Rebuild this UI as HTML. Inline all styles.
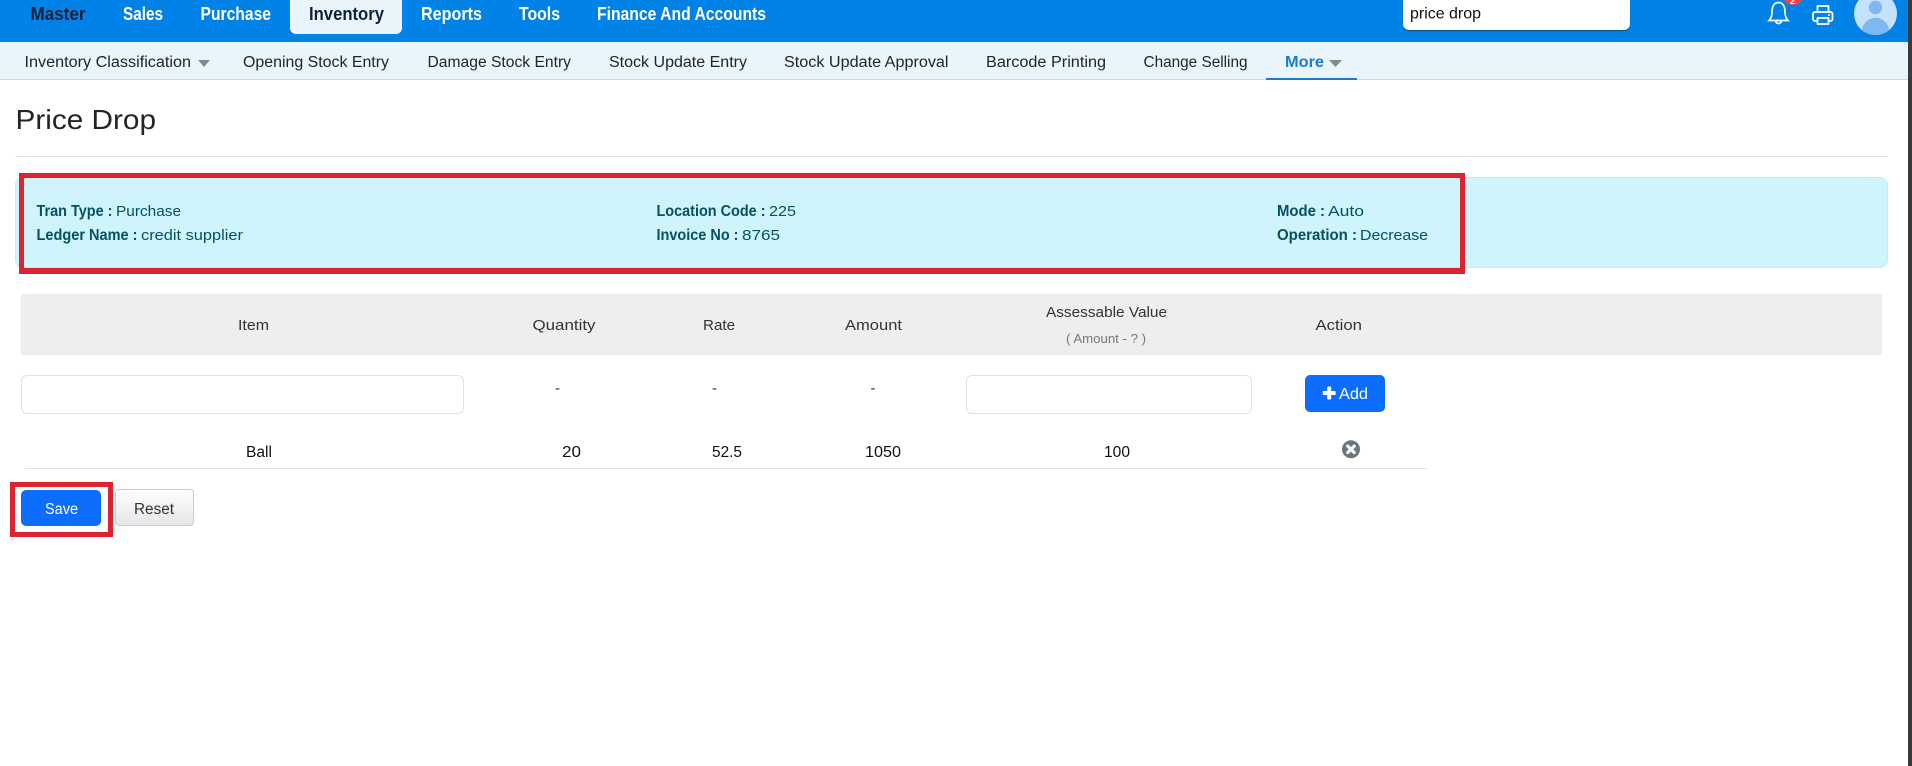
<!DOCTYPE html>
<html lang="en">
<head>
<meta charset="utf-8">
<title>Price Drop</title>
<style>
html,body{margin:0;padding:0;background:#fff;width:1912px;height:766px;overflow:hidden}
.b{position:absolute;box-sizing:border-box}
svg{position:absolute;left:0;top:0}
text{font-family:"Liberation Sans",sans-serif}
.n{font-size:18px;font-weight:bold;fill:#fff}
.s{font-size:15.5px;fill:#212529}
.l{font-size:16px;font-weight:bold;fill:#055160}
.v{font-size:15px;fill:#055160}
.t{font-size:15px;fill:#333}
.d{font-size:15.5px;fill:#111}
</style>
</head>
<body>
<div class="b" style="left:0;top:0;width:1912px;height:42px;background:#0082e6"></div>
<div class="b" style="left:290px;top:0;width:112px;height:34px;background:#eaf4fb;border-radius:0 0 6px 6px"></div>
<div class="b" style="left:1403px;top:-5px;width:227px;height:35px;background:#fff;border-radius:6px;box-shadow:0 1px 1px #0b4a70"></div>
<div class="b" style="left:0;top:42px;width:1912px;height:38px;background:#eaf4fb;border-bottom:1px solid #cbdbe6"></div>
<div class="b" style="left:1266px;top:78px;width:91px;height:2px;background:#1a7cc9"></div>
<div class="b" style="left:15px;top:156px;width:1873px;height:1px;background:#e2e4e6"></div>
<div class="b" style="left:15px;top:177px;width:1873px;height:91px;background:#cff4fc;border:1px solid #b6effb;border-radius:8px"></div>
<div class="b" style="left:19px;top:173px;width:1446px;height:101px;border:5px solid #dc2430;border-bottom-width:6px"></div>
<div class="b" style="left:21px;top:294px;width:1861px;height:61px;background:#eee"></div>
<div class="b" style="left:21px;top:375px;width:443px;height:39px;background:#fff;border:1px solid #dee2e6;border-radius:6px"></div>
<div class="b" style="left:966px;top:375px;width:286px;height:39px;background:#fff;border:1px solid #dee2e6;border-radius:6px"></div>
<div class="b" style="left:1305px;top:375px;width:80px;height:37px;background:#0d6efd;border-radius:5px"></div>
<div class="b" style="left:25px;top:468px;width:1403px;height:1px;background:#dee2e6"></div>
<div class="b" style="left:10px;top:482px;width:103px;height:55px;border:5px solid #dc2430"></div>
<div class="b" style="left:21px;top:490px;width:80px;height:36px;background:#0d6efd;border-radius:5px"></div>
<div class="b" style="left:115px;top:489px;width:79px;height:37px;background:linear-gradient(#fff,#e6e6e6);border:1px solid #ccc;border-radius:4px"></div>
<div class="b" style="left:1908px;top:0;width:4px;height:766px;background:#3a3a3a"></div>

<svg width="1912" height="766" viewBox="0 0 1912 766" xmlns="http://www.w3.org/2000/svg">
<g>
<text class="n" x="30.5" y="20" textLength="55" lengthAdjust="spacingAndGlyphs" style="fill:#0b2239">Master</text>
<text class="n" x="123" y="20" textLength="40" lengthAdjust="spacingAndGlyphs">Sales</text>
<text class="n" x="200.5" y="20" textLength="70.5" lengthAdjust="spacingAndGlyphs">Purchase</text>
<text class="n" x="309" y="20" textLength="75" lengthAdjust="spacingAndGlyphs" style="fill:#0b2239">Inventory</text>
<text class="n" x="421" y="20" textLength="61" lengthAdjust="spacingAndGlyphs">Reports</text>
<text class="n" x="519" y="20" textLength="41" lengthAdjust="spacingAndGlyphs">Tools</text>
<text class="n" x="597" y="20" textLength="169" lengthAdjust="spacingAndGlyphs">Finance And Accounts</text>
<text x="1410" y="18.5" textLength="71" lengthAdjust="spacingAndGlyphs" style="font-size:16px;fill:#111">price drop</text>
</g>
<!-- bell -->
<g fill="none" stroke="#fff" stroke-width="1.7">
<path d="M1778.5 2.5C1773.5 2.5 1772 7.5 1772 12C1772 16 1771 18.5 1769 20.5H1788C1786 18.5 1785 16 1785 12C1785 7.5 1783.5 2.5 1778.5 2.5Z"/>
<path d="M1775.5 20.5a3 3 0 0 0 6 0"/>
</g>
<path d="M1784 0H1802C1801 3 1797 5 1793 5C1789 5 1785 3 1784 0Z" fill="#e5484d"/>
<text x="1790" y="4" style="font-size:9px;font-weight:bold;fill:#fff">2</text>
<!-- printer -->
<g fill="none" stroke="#fff" stroke-width="1.8" stroke-linejoin="round">
<path d="M1817.5 12V6H1828.5V12"/>
<rect x="1813" y="12" width="19.5" height="9" rx="2"/>
<rect x="1817.5" y="18" width="11" height="6" fill="#0082e6"/>
</g>
<circle cx="1829" cy="15" r="1" fill="#fff"/>
<!-- avatar -->
<defs><clipPath id="av"><circle cx="1875.5" cy="13.5" r="21.5"/></clipPath></defs>
<circle cx="1875.5" cy="13.5" r="21.5" fill="#c5e2fb"/>
<g clip-path="url(#av)">
<circle cx="1875.5" cy="7.5" r="6.7" fill="#7fb8f0"/>
<ellipse cx="1875.5" cy="33" rx="14" ry="15.3" fill="#7fb8f0"/>
</g>

<text class="s" x="24.5" y="67" textLength="166.5" lengthAdjust="spacingAndGlyphs">Inventory Classification</text>
<path d="M198 60H210L204 67Z" fill="#808a90"/>
<text class="s" x="243" y="67" textLength="146" lengthAdjust="spacingAndGlyphs">Opening Stock Entry</text>
<text class="s" x="427.5" y="67" textLength="143.5" lengthAdjust="spacingAndGlyphs">Damage Stock Entry</text>
<text class="s" x="609" y="67" textLength="138" lengthAdjust="spacingAndGlyphs">Stock Update Entry</text>
<text class="s" x="784" y="67" textLength="164.5" lengthAdjust="spacingAndGlyphs">Stock Update Approval</text>
<text class="s" x="986" y="67" textLength="120" lengthAdjust="spacingAndGlyphs">Barcode Printing</text>
<text class="s" x="1143.5" y="67" textLength="104" lengthAdjust="spacingAndGlyphs">Change Selling</text>
<text x="1285" y="67" textLength="39" lengthAdjust="spacingAndGlyphs" style="font-size:16px;font-weight:bold;fill:#1a7cc9">More</text>
<path d="M1329 60H1342L1335.5 67Z" fill="#808a90"/>

<text x="15.5" y="129" textLength="140.5" lengthAdjust="spacingAndGlyphs" style="font-size:28px;fill:#212529">Price Drop</text>

<text class="l" x="36.5" y="216" textLength="76" lengthAdjust="spacingAndGlyphs">Tran Type :</text>
<text class="v" x="116" y="216" textLength="65" lengthAdjust="spacingAndGlyphs">Purchase</text>
<text class="l" x="36.5" y="240" textLength="101" lengthAdjust="spacingAndGlyphs">Ledger Name :</text>
<text class="v" x="141" y="240" textLength="102" lengthAdjust="spacingAndGlyphs">credit supplier</text>
<text class="l" x="656.5" y="216" textLength="109" lengthAdjust="spacingAndGlyphs">Location Code :</text>
<text class="v" x="769" y="216" textLength="27" lengthAdjust="spacingAndGlyphs">225</text>
<text class="l" x="656.5" y="240" textLength="82" lengthAdjust="spacingAndGlyphs">Invoice No :</text>
<text class="v" x="742" y="240" textLength="38" lengthAdjust="spacingAndGlyphs">8765</text>
<text class="l" x="1277" y="216" textLength="48" lengthAdjust="spacingAndGlyphs">Mode :</text>
<text class="v" x="1328" y="216" textLength="36" lengthAdjust="spacingAndGlyphs">Auto</text>
<text class="l" x="1277" y="240" textLength="80" lengthAdjust="spacingAndGlyphs">Operation :</text>
<text class="v" x="1360" y="240" textLength="68" lengthAdjust="spacingAndGlyphs">Decrease</text>

<text class="t" x="238" y="330" textLength="31" lengthAdjust="spacingAndGlyphs">Item</text>
<text class="t" x="532.5" y="330" textLength="63" lengthAdjust="spacingAndGlyphs">Quantity</text>
<text class="t" x="703" y="330" textLength="32" lengthAdjust="spacingAndGlyphs">Rate</text>
<text class="t" x="845" y="330" textLength="57" lengthAdjust="spacingAndGlyphs">Amount</text>
<text class="t" x="1046" y="317" textLength="121" lengthAdjust="spacingAndGlyphs">Assessable Value</text>
<text x="1066" y="343" textLength="80" lengthAdjust="spacingAndGlyphs" style="font-size:13px;fill:#777">( Amount - ? )</text>
<text class="t" x="1315.5" y="330" textLength="46.5" lengthAdjust="spacingAndGlyphs">Action</text>

<text class="t" x="555" y="393">-</text>
<text class="t" x="712" y="393">-</text>
<text class="t" x="870.5" y="393">-</text>

<rect x="1322.7" y="391" width="13" height="4" rx="1" fill="#fff"/>
<rect x="1327.2" y="386.5" width="4" height="13" rx="1" fill="#fff"/>
<text x="1339" y="399" textLength="29" lengthAdjust="spacingAndGlyphs" style="font-size:15.5px;fill:#fff">Add</text>

<text class="d" x="246" y="457" textLength="26" lengthAdjust="spacingAndGlyphs">Ball</text>
<text class="d" x="562" y="457" textLength="19" lengthAdjust="spacingAndGlyphs">20</text>
<text class="d" x="712" y="457" textLength="30" lengthAdjust="spacingAndGlyphs">52.5</text>
<text class="d" x="865" y="457" textLength="36" lengthAdjust="spacingAndGlyphs">1050</text>
<text class="d" x="1104" y="457" textLength="26" lengthAdjust="spacingAndGlyphs">100</text>

<circle cx="1351" cy="449.3" r="9" fill="#6c757d"/>
<path d="M1347.8 446.1L1354.2 452.5M1354.2 446.1L1347.8 452.5" stroke="#fff" stroke-width="3.2" stroke-linecap="round"/>

<text x="45" y="514" textLength="33" lengthAdjust="spacingAndGlyphs" style="font-size:15.5px;fill:#fff">Save</text>
<text x="134" y="514" textLength="40" lengthAdjust="spacingAndGlyphs" style="font-size:15.5px;fill:#333">Reset</text>
</svg>
</body>
</html>
